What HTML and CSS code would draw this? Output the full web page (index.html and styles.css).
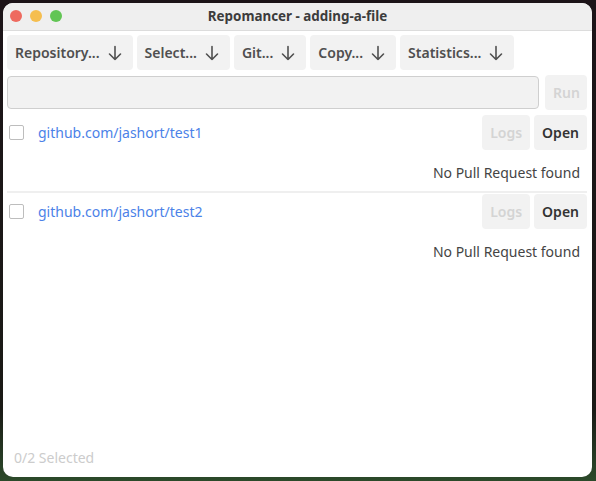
FILE: index.html
```html
<!DOCTYPE html>
<html>
<head>
<meta charset="utf-8">
<link rel="stylesheet" href="styles.css">
</head>
<body>
<div class="window">
  <div class="titlebar">
    <div class="lights">
      <span class="light red"></span>
      <span class="light yellow"></span>
      <span class="light green"></span>
    </div>
    <div class="title">Repomancer - adding-a-file</div>
  </div>
  <div class="content">
    <div class="toolbar">
      <button class="menu">Repository... <svg class="arr" viewBox="0 0 14 16"><path d="M7 1.5V14.5M1.5 9L7 14.5L12.5 9"/></svg></button>
      <button class="menu">Select... <svg class="arr" viewBox="0 0 14 16"><path d="M7 1.5V14.5M1.5 9L7 14.5L12.5 9"/></svg></button>
      <button class="menu">Git... <svg class="arr" viewBox="0 0 14 16"><path d="M7 1.5V14.5M1.5 9L7 14.5L12.5 9"/></svg></button>
      <button class="menu">Copy... <svg class="arr" viewBox="0 0 14 16"><path d="M7 1.5V14.5M1.5 9L7 14.5L12.5 9"/></svg></button>
      <button class="menu">Statistics... <svg class="arr" viewBox="0 0 14 16"><path d="M7 1.5V14.5M1.5 9L7 14.5L12.5 9"/></svg></button>
    </div>
    <div class="cmdrow">
      <div class="cmd"></div>
      <button class="btn disabled run">Run</button>
    </div>
    <div class="repo">
      <div class="repo-top">
        <span class="check"></span>
        <a class="link">github.com/jashort/test1</a>
        <div class="spacer"></div>
        <button class="btn disabled">Logs</button>
        <button class="btn">Open</button>
      </div>
      <div class="status">No Pull Request found</div>
    </div>
    <div class="sep"></div>
    <div class="repo">
      <div class="repo-top">
        <span class="check"></span>
        <a class="link">github.com/jashort/test2</a>
        <div class="spacer"></div>
        <button class="btn disabled">Logs</button>
        <button class="btn">Open</button>
      </div>
      <div class="status">No Pull Request found</div>
    </div>
    <div class="fill"></div>
    <div class="footer">0/2 Selected</div>
  </div>
</div>
</body>
</html>
```
FILE: styles.css
```css
html, body {
  margin: 0;
  padding: 0;
  width: 596px;
  height: 481px;
  overflow: hidden;
  background: linear-gradient(to bottom, #1c1418 0%, #1a1a16 85%, #2c4a2a 100%);
  font-family: "Noto Sans", "Open Sans", sans-serif;
}
.window {
  margin: 3px 4px 0 3px;
  height: 474px;
  border-radius: 10px;
  background: #fff;
  overflow: hidden;
  display: flex;
  flex-direction: column;
}
.titlebar {
  height: 27px;
  background: #efefef;
  border-bottom: 1px solid #dcdcdc;
  position: relative;
  display: flex;
  align-items: center;
  justify-content: center;
}
.lights {
  position: absolute;
  left: 7px;
  top: 7px;
  display: flex;
  gap: 8px;
}
.light {
  width: 12px;
  height: 12px;
  border-radius: 50%;
  display: block;
}
.red { background: #ee6a5f; }
.yellow { background: #f5be4f; }
.green { background: #62c554; }
.title {
  font-size: 13.4px;
  font-weight: 700;
  color: #3c3c3c;
  margin-top: -1px;
}
.content {
  flex: 1;
  display: flex;
  flex-direction: column;
  padding: 4px 5px 10px 4px;
}
.toolbar {
  display: flex;
  gap: 4px;
}
button {
  font-family: inherit;
  border: none;
  margin: 0;
}
.menu {
  height: 35px;
  background: #f2f2f2;
  border-radius: 4px;
  font-size: 14px;
  font-weight: 600;
  color: #4f4f4f;
  padding: 0 11px 0 8px;
  display: flex;
  align-items: center;
}
.arr {
  width: 14px;
  height: 16px;
  margin-left: 8px;
  fill: none;
  stroke: #505050;
  stroke-width: 1.6;
  stroke-linecap: round;
  stroke-linejoin: round;
}
.cmdrow {
  display: flex;
  gap: 6px;
  margin-top: 5px;
}
.cmd {
  flex: 1;
  height: 31px;
  border: 1px solid #cfcfcf;
  background: #f2f2f2;
  border-radius: 4px;
  margin-top: 1px;
}
.btn {
  height: 35px;
  background: #f2f2f2;
  border-radius: 4px;
  font-size: 14px;
  font-weight: 600;
  color: #333;
  padding: 0 8px;
}
.btn.disabled { color: #d4d4d4; }
.run { width: 42px; }
.repo {
  display: flex;
  flex-direction: column;
}
.repo-top {
  display: flex;
  align-items: center;
  gap: 4px;
  margin-top: 5px;
}
.sep + .repo .repo-top { margin-top: 1px; }
.check {
  width: 13px;
  height: 13px;
  border: 1.5px solid #bdbdbd;
  border-radius: 2px;
  margin-left: 2px;
  margin-right: 10px;
}
.link {
  color: #4b82e8;
  font-size: 14px;
}
.spacer { flex: 1; }
.status {
  text-align: right;
  font-size: 14px;
  color: #444;
  padding-right: 7px;
  margin-top: 13px;
  height: 20px;
}
.sep {
  height: 2px;
  background: #efefef;
  margin-top: 8px;
}
.fill { flex: 1; }
.footer {
  font-size: 14px;
  color: #cccccc;
  padding-left: 7px;
}
```
